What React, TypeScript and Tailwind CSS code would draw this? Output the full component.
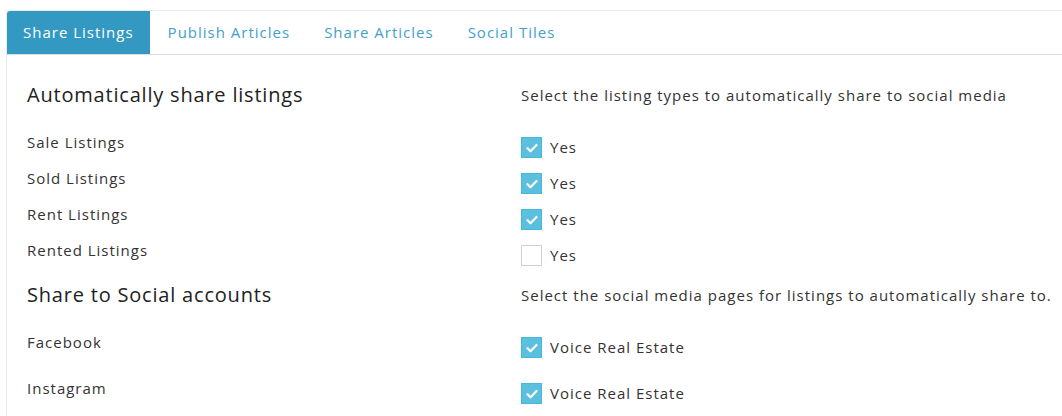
import React from 'react';

const font = { fontFamily: '"Open Sans", "Noto Sans", sans-serif' };

const tabs = ['Share Listings', 'Publish Articles', 'Share Articles', 'Social Tiles'];

function Check({ checked }: { checked: boolean }) {
  return (
    <span
      className={`flex h-[21px] w-[21px] shrink-0 items-center justify-center border ${
        checked ? 'border-[#46b8da] bg-[#5bc0de]' : 'border-[#d4cfca] bg-white'
      }`}
    >
      {checked && (
        <svg width="12" height="10" viewBox="0 0 12 10" fill="none">
          <path d="M1.5 5.2l3 3 6-6.2" stroke="white" strokeWidth="2.2" strokeLinecap="round" strokeLinejoin="round" />
        </svg>
      )}
    </span>
  );
}

function Row({ label, value, checked, tall }: { label: string; value: string; checked: boolean; tall?: boolean }) {
  return (
    <div className={`flex ${tall ? 'h-[46px]' : 'h-[36px]'}`}>
      <div className={`w-[494px] text-[15px] tracking-[1px] text-[#333] ${tall ? 'leading-[46px]' : 'leading-[36px]'}`}>
        {label}
      </div>
      <div className={`flex items-center gap-2 self-start ${tall ? 'pt-[18px]' : 'pt-[13px]'}`}>
        <Check checked={checked} />
        <span className="text-[15px] leading-[21px] tracking-[1px] text-[#333]">{value}</span>
      </div>
    </div>
  );
}

export default function App() {
  return (
    <div className="h-[416px] w-[1062px] overflow-hidden bg-white pl-[6px] pt-[10px]" style={font}>
      <div className="h-full border-l border-t border-[#ebebeb]">
        {/* tabs */}
        <div className="flex h-[44px] border-b border-[#dddde2]">
          {tabs.map((t, i) => (
            <div
              key={t}
              className={`mr-[2px] flex items-center px-4 text-[15px] tracking-[1px] ${
                i === 0 ? 'rounded-tl-[3px] bg-[#3399c2] text-white' : 'text-[#3fa2cc]'
              }`}
            >
              {t}
            </div>
          ))}
        </div>

        <div className="pl-5 pt-[26px]">
          <div className="flex h-[28px] items-center">
            <div className="w-[494px] text-[20px] tracking-[0.8px] text-[#222]">Automatically share listings</div>
            <div className="text-[15px] tracking-[1px] text-[#333]">
              Select the listing types to automatically share to social media
            </div>
          </div>

          <div className="mt-[15px]">
            <Row label="Sale Listings" value="Yes" checked />
            <Row label="Sold Listings" value="Yes" checked />
            <Row label="Rent Listings" value="Yes" checked />
            <Row label="Rented Listings" value="Yes" checked={false} />
          </div>

          <div className="mt-[13px] flex h-[28px] items-center">
            <div className="w-[494px] text-[20px] tracking-[0.8px] text-[#222]">Share to Social accounts</div>
            <div className="whitespace-nowrap text-[15px] tracking-[1px] text-[#333]">
              Select the social media pages for listings to automatically share to.
            </div>
          </div>

          <div className="mt-[10px]">
            <Row label="Facebook" value="Voice Real Estate" checked tall />
            <Row label="Instagram" value="Voice Real Estate" checked tall />
          </div>
        </div>
      </div>
    </div>
  );
}
